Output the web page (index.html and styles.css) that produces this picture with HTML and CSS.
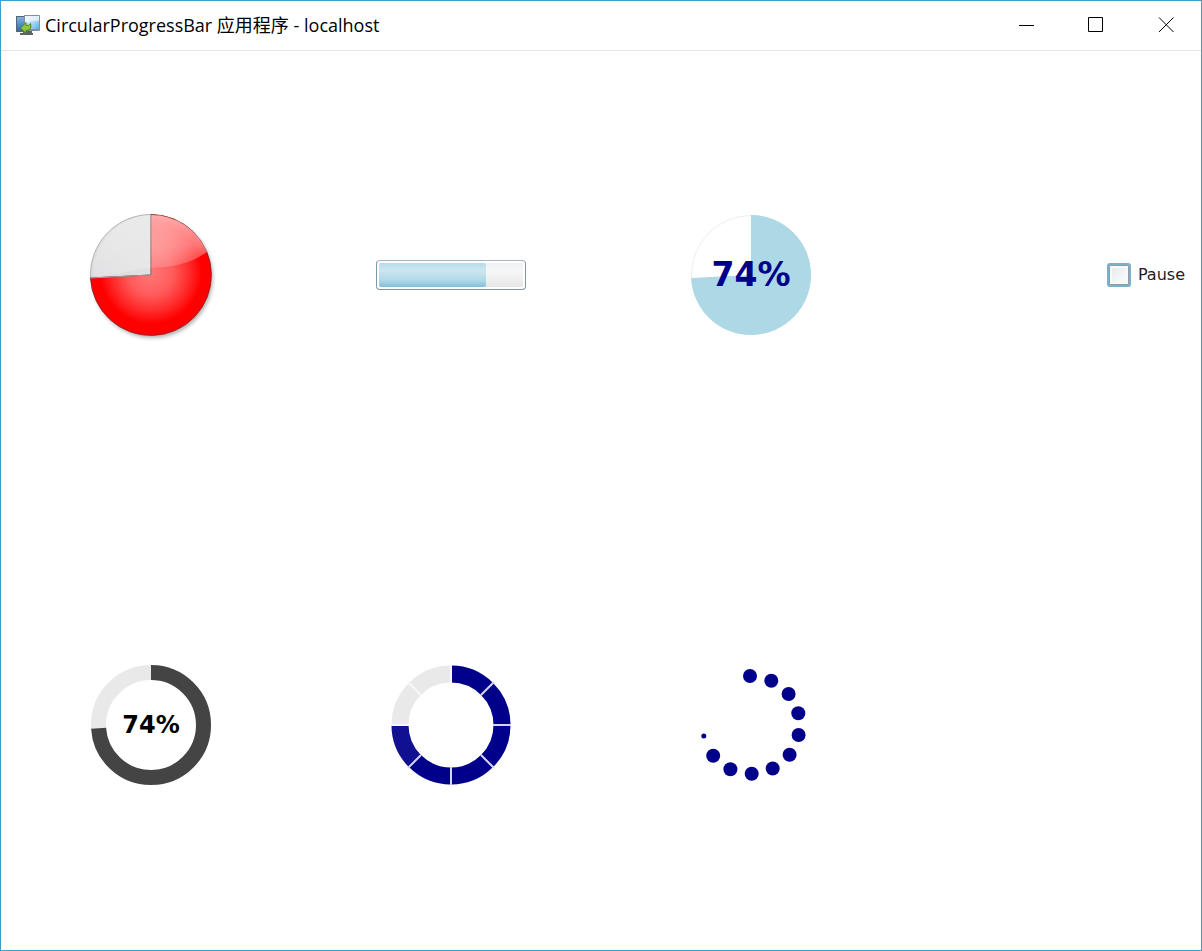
FILE: index.html
```html
<!DOCTYPE html>
<html lang="zh">
<head>
<meta charset="utf-8">
<title>CircularProgressBar 应用程序 - localhost</title>
<link rel="stylesheet" href="styles.css">
</head>
<body>
<div class="window">
  <header class="titlebar">
    <svg class="app-icon" viewBox="0 0 24 20" aria-hidden="true">
      <defs>
        <linearGradient id="screen" x1="0" y1="0" x2="1" y2="1">
          <stop offset="0" stop-color="#e8f5ff"/><stop offset=".5" stop-color="#b5dcf7"/><stop offset="1" stop-color="#55b4ec"/>
        </linearGradient>
        <linearGradient id="back" x1="0" y1="0" x2="0" y2="1">
          <stop offset="0" stop-color="#7db4e4"/><stop offset="1" stop-color="#2f6fb2"/>
        </linearGradient>
      </defs>
      <path d="M0 1h9v16H0z" fill="#596570"/>
      <path d="M1 2h8v13H1z" fill="url(#back)"/>
      <path d="M7 16h9v2h1v2H4v-2h3z" fill="#5d6262"/>
      <path d="M8 0h15q1 0 1 1v14q0 1-1 1H8z" fill="#81909a"/>
      <path d="M9 1h14v13H9z" fill="url(#screen)"/>
      <path d="M9 1h14v5Q15 5 9 9z" fill="#fff" opacity=".55"/>
      <path d="M4.500 13 10 7.500v3q3 .5 4.500-2 2 7-4.500 7v3z" fill="#8cc63a" stroke="#4f8423"/>
    </svg>
    <h1 class="title">CircularProgressBar 应用程序 - localhost</h1>
    <div class="controls">
      <button class="control" type="button" aria-label="Minimize"><svg viewBox="0 0 16 16"><path d="M1 8.500h15"/></svg></button>
      <button class="control" type="button" aria-label="Maximize"><svg viewBox="0 0 16 16"><path d="M.5.5h14v14H.5z"/></svg></button>
      <button class="control" type="button" aria-label="Close"><svg viewBox="0 0 16 16"><path d="M1 .5 15.500 15M15.500 .5 1 15"/></svg></button>
    </div>
  </header>
  <main class="board">
    <div class="cell">
      <svg class="dial" viewBox="-70 -70 140 140" role="img" aria-label="74%">
        <defs>
          <radialGradient id="red" gradientUnits="userSpaceOnUse" cx="0" cy="-2" r="62">
            <stop offset="0" stop-color="#ff7878"/><stop offset=".35" stop-color="#ff5c5c"/><stop offset=".6" stop-color="#ff2e2e"/><stop offset=".82" stop-color="#f00"/><stop offset="1" stop-color="#f00"/>
          </radialGradient>
          <linearGradient id="grey" x1="0" y1="1" x2="1" y2="0">
            <stop offset="0" stop-color="#d9dadc"/><stop offset=".5" stop-color="#e0e0e1"/><stop offset="1" stop-color="#e2e2e2"/>
          </linearGradient>
          <linearGradient id="shine" gradientUnits="userSpaceOnUse" x1="0" y1="-60" x2="0" y2="0">
            <stop offset="0" stop-color="#fff" stop-opacity=".68"/><stop offset=".5" stop-color="#fff" stop-opacity=".46"/><stop offset="1" stop-color="#fff" stop-opacity=".06"/>
          </linearGradient>
          <linearGradient id="gloss" gradientUnits="userSpaceOnUse" x1="0" y1="-60" x2="0" y2="0">
            <stop offset="0" stop-color="#fff" stop-opacity=".3"/><stop offset="1" stop-color="#fff" stop-opacity=".2"/>
          </linearGradient>
          <filter id="shadow" x="-20%" y="-20%" width="140%" height="140%"><feGaussianBlur stdDeviation="2"/></filter>
        </defs>
        <circle cx="1.500" cy="2.500" r="60" fill="#000" opacity=".35" filter="url(#shadow)"/>
        <circle r="60.500" fill="#e4e4e4"/>
        <path d="M0 0L-60.500 3A60.500 60.500 0 0 1 0-60.500z" fill="url(#grey)" stroke="#b8b8b8"/>
        <path d="M0 0V-60.500A60.500 60.500 0 1 1-60.500 3z" fill="url(#red)" stroke="#7c2626" stroke-opacity=".8"/>
        <path d="M0-60A60 60 0 0 1 56-23C39-11 22-8 0-7z" fill="url(#shine)"/>
        <path d="M0-60V-7C-24-5-40 3-58 0A60 60 0 0 1 0-60z" fill="url(#gloss)"/>
        <path d="M0-60V0L-60 3" fill="none" stroke="#a89898"/>
      </svg>
    </div>
    <div class="cell">
      <progress class="bar" value="74" max="100" aria-label="Progress">74%</progress>
    </div>
    <div class="cell">
      <svg class="dial" viewBox="-70 -70 140 140" aria-hidden="true">
        <circle r="59.500" fill="#fff" stroke="#eee"/>
        <path d="M0 0V-60A60 60 0 1 1-59.900 3z" fill="#add8e6"/>
      </svg>
      <span class="value value-large">74%</span>
    </div>
    <div class="cell cell-end">
      <label class="option"><input class="check" type="checkbox">Pause</label>
    </div>
    <div class="cell">
      <svg class="dial" viewBox="-70 -70 140 140" aria-hidden="true">
        <circle r="52.500" fill="none" stroke="#e9e9e9" stroke-width="15"/>
        <circle r="52.500" fill="none" stroke="#444" stroke-width="15" pathLength="100" stroke-dasharray="74 26" transform="rotate(-90)"/>
      </svg>
      <span class="value">74%</span>
    </div>
    <div class="cell">
      <svg class="dial" viewBox="-70 -70 140 140" role="img" aria-label="74%">
        <g fill="none" stroke-width="17" transform="rotate(-90)">
          <circle r="51" stroke="#e9e9e9"/>
          <circle r="51" stroke="#00008b" pathLength="8" stroke-dasharray="5 3"/>
          <circle r="51" stroke="#101091" pathLength="8" stroke-dasharray="0 5 1 2"/>
        </g>
        <g stroke="#d5d5ef" stroke-width="2">
          <path d="M30 30L43 43M0 42V60M-30 30L-43 43M42 0H60M30-30L43-43"/>
          <path d="M-30-30L-43-43M0-42V-60M-42 0H-60" stroke="#f7f7f7"/>
        </g>
      </svg>
    </div>
    <div class="cell">
      <svg class="dial" viewBox="-70 -70 140 140" role="img" aria-label="74%">
        <g fill="#00008b">
          <circle cx="-1" cy="-49" r="7"/><circle cx="20.300" cy="-44.300" r="7"/><circle cx="37.600" cy="-31" r="7"/>
          <circle cx="47.300" cy="-11.700" r="7"/><circle cx="47.600" cy="10" r="7"/><circle cx="38.600" cy="29.700" r="7"/>
          <circle cx="21.700" cy="43.500" r="7"/><circle cx=".7" cy="48.700" r="7"/><circle cx="-20.600" cy="44.200" r="7"/>
          <circle cx="-37.800" cy="30.700" r="7"/><circle cx="-47.200" cy="11" r="2.500"/>
        </g>
      </svg>
    </div>
  </main>
</div>
</body>
</html>
```
FILE: styles.css
```css
* { box-sizing: border-box; }
body { margin: 0; background: #fff; font-family: "DejaVu Sans", sans-serif; }
.window {
  display: flex;
  flex-direction: column;
  min-height: 100vh;
  border: 1px solid #3f9fcb;
}
.titlebar {
  display: flex;
  align-items: center;
  gap: 5px;
  height: 50px;
  padding: 0 0 1px 15px;
  border-bottom: 1px solid #e5e5e5;
}
.app-icon { width: 24px; height: 20px; }
.title {
  flex: 1;
  margin: 0;
  font: 400 18px/24px "Open Sans", "Noto Sans CJK SC", sans-serif;
  color: #000;
}
.controls { display: flex; }
.control {
  display: grid;
  place-items: center;
  width: 70px;
  height: 46px;
  padding: 0;
  border: 0;
  background: none;
}
.control svg { width: 16px; height: 16px; fill: none; stroke: #000; }
.board {
  flex: 1;
  display: grid;
  grid-template-columns: repeat(4, 1fr);
  grid-template-rows: repeat(2, 1fr);
  row-gap: 2px;
  padding-bottom: 1px;
}
.cell { display: grid; place-items: center; align-content: center; }
.cell > * { grid-area: 1 / 1; }
.cell-end { justify-items: end; padding-right: 16px; }
.dial { display: block; width: 140px; height: 140px; }
.value { font-weight: 700; font-size: 24px; line-height: 28px; color: #000; }
.value-large { font-size: 33px; line-height: 36px; color: #00008b; }
.bar {
  appearance: none;
  width: 150px;
  height: 30px;
  padding: 2px;
  border: 1px solid;
  border-color: #a9b4be #8295a6 #8295a6;
  border-radius: 4px;
  background: #fff;
}
.bar::-webkit-progress-bar {
  border-radius: 2px;
  background: linear-gradient(#f0f1f2, #f5f6f7 35%, #f1f1f2 60%, #e6e6e6);
}
.bar::-webkit-progress-value {
  border-radius: 2px;
  background: linear-gradient(#b5dcea, #cde6f0 30%, #b9dce9 60%, #acd7e8 75%, #82bddb);
}
.option {
  display: flex;
  align-items: center;
  gap: 7px;
  font-size: 16px;
  line-height: 24px;
  color: #1c1c24;
}
.check {
  appearance: none;
  width: 24px;
  height: 24px;
  margin: 0;
  border: 2px solid #76b2cc;
  border-radius: 3px;
  background: linear-gradient(135deg, #e3e8ec, #fff);
  box-shadow: inset 0 0 0 1px #929da5, inset 0 0 0 3px #f8f8f8;
}
```
